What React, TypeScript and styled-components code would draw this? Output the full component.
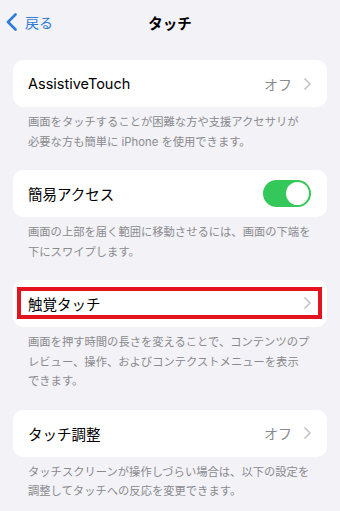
import styled, { createGlobalStyle } from "styled-components";

const GlobalStyle = createGlobalStyle`
  body {
    margin: 0;
    background-color: #f2f2f7;
    font-family: "Inter", "Noto Sans CJK JP", sans-serif;
  }
`;

const Page = styled.div`
  min-height: 511px;
  background-color: #f2f2f7;
`;

const NavBar = styled.div`
  position: relative;
  height: 44px;
  display: flex;
  align-items: center;
  justify-content: center;
`;

const BackButton = styled.div`
  position: absolute;
  left: 6px;
  top: 0;
  height: 44px;
  display: flex;
  align-items: center;
  gap: 8px;
  color: #2f7bd8;
  font-size: 14px;
`;

const Title = styled.h1`
  margin: 0;
  font-size: 14.5px;
  font-weight: 700;
  color: #000;
`;

const Content = styled.div`
  padding: 16px 13px 0;
`;

const Card = styled.div<{ $highlight?: boolean }>`
  height: 47px;
  box-sizing: border-box;
  background-color: #fff;
  border-radius: 10px;
  padding: ${(p) => (p.$highlight ? "7px 5px 8px 4px" : "0 16px 0 15px")};
  display: flex;
`;

const Row = styled.div<{ $highlight?: boolean }>`
  flex: 1;
  display: flex;
  align-items: center;
  justify-content: space-between;
  ${(p) =>
    p.$highlight &&
    `
    border: 4px solid #e3141e;
    padding: 0 7px;
  `}
`;

const Label = styled.span`
  font-size: 14.5px;
  color: #000;
`;

const Accessory = styled.span`
  display: flex;
  align-items: center;
  gap: 12px;
  font-size: 14px;
  color: #8a8a8e;
`;

const Footer = styled.p`
  margin: 0 0 18px;
  padding: 6px 15px 0;
  font-size: 11.3px;
  line-height: 19.5px;
  color: #8a8a8e;
`;

const Line = styled.span`
  display: block;
  white-space: nowrap;
`;

const Track = styled.div<{ $on: boolean }>`
  width: 48px;
  height: 27px;
  border-radius: 14px;
  background-color: ${(p) => (p.$on ? "#34c759" : "#e9e9ea")};
  display: flex;
  align-items: center;
  justify-content: ${(p) => (p.$on ? "flex-end" : "flex-start")};
  padding: 2px;
  box-sizing: border-box;
`;

const Thumb = styled.div`
  width: 23px;
  height: 23px;
  border-radius: 50%;
  background-color: #fff;
`;

function Chevron() {
  return (
    <svg width="7" height="12" viewBox="0 0 7 12">
      <polyline points="1,1 6,6 1,11" fill="none" stroke="#c4c4c7" strokeWidth="1.7" strokeLinecap="round" strokeLinejoin="round" />
    </svg>
  );
}

function BackChevron() {
  return (
    <svg width="11" height="18" viewBox="0 0 11 18">
      <polyline points="9.5,1.5 2,9 9.5,16.5" fill="none" stroke="#2f7bd8" strokeWidth="2.6" strokeLinecap="round" strokeLinejoin="round" />
    </svg>
  );
}

interface Section {
  label: string;
  value?: string;
  toggle?: boolean;
  highlight?: boolean;
  footer: string[];
}

const sections: Section[] = [
  {
    label: "AssistiveTouch",
    value: "オフ",
    footer: ["画面をタッチすることが困難な方や支援アクセサリが", "必要な方も簡単に iPhone を使用できます。"],
  },
  {
    label: "簡易アクセス",
    toggle: true,
    footer: ["画面の上部を届く範囲に移動させるには、画面の下端を", "下にスワイプします。"],
  },
  {
    label: "触覚タッチ",
    highlight: true,
    footer: [
      "画面を押す時間の長さを変えることで、コンテンツのプ",
      "レビュー、操作、およびコンテクストメニューを表示",
      "できます。",
    ],
  },
  {
    label: "タッチ調整",
    value: "オフ",
    footer: ["タッチスクリーンが操作しづらい場合は、以下の設定を", "調整してタッチへの反応を変更できます。"],
  },
];

function App() {
  return (
    <>
      <GlobalStyle />
      <Page>
        <NavBar>
          <BackButton>
            <BackChevron />
            戻る
          </BackButton>
          <Title>タッチ</Title>
        </NavBar>
        <Content>
          {sections.map((s) => (
            <div key={s.label}>
              <Card $highlight={s.highlight}>
                <Row $highlight={s.highlight}>
                  <Label>{s.label}</Label>
                  {s.toggle ? (
                    <Track $on={true}>
                      <Thumb />
                    </Track>
                  ) : (
                    <Accessory>
                      {s.value}
                      <Chevron />
                    </Accessory>
                  )}
                </Row>
              </Card>
              <Footer>
                {s.footer.map((l) => (
                  <Line key={l}>{l}</Line>
                ))}
              </Footer>
            </div>
          ))}
        </Content>
      </Page>
    </>
  );
}

export default App;
